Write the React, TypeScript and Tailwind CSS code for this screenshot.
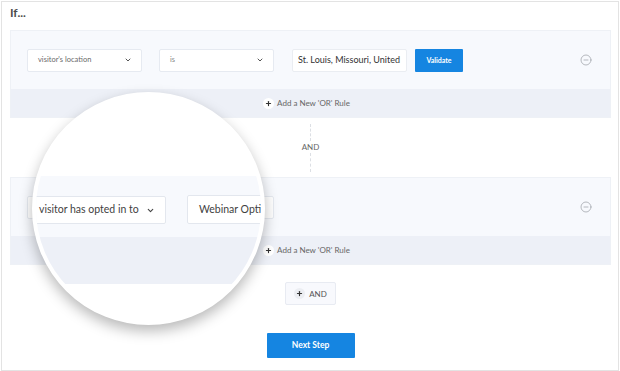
import { ChevronDown, MinusCircle, Plus } from "lucide-react";

function Select({ label, dim = false, hidden = false }: { label: string; dim?: boolean; hidden?: boolean }) {
  return (
    <div className="w-[115px] h-[23px] shrink-0 bg-white border border-[#e6eaf1] rounded-[2px] flex items-center justify-between pl-[10px] pr-[9px]">
      <span className={`text-[7.5px] ${dim ? "text-[#8a8a8a]" : "text-[#6a6a6a]"} ${hidden ? "invisible" : ""}`}>{label}</span>
      <ChevronDown className="w-[8px] h-[8px] text-[#555]" strokeWidth={3} />
    </div>
  );
}

function OrStrip() {
  return (
    <div className="h-[28px] bg-[#edf0f7] flex items-center justify-center gap-[3px] pr-[8px]">
      <span className="w-[11px] h-[11px] rounded-full bg-white flex items-center justify-center">
        <Plus className="w-[7px] h-[7px] text-[#333]" strokeWidth={4} />
      </span>
      <span className="text-[8px] text-[#666]">Add a New 'OR' Rule</span>
    </div>
  );
}

function RemoveIcon() {
  return <MinusCircle className="w-[12px] h-[12px] text-[#a3a7ad] ml-auto" strokeWidth={1.6} />;
}

export default function App() {
  return (
    <div className="w-[620px] h-[371px] bg-white relative overflow-hidden font-['Lato',sans-serif]">
      <div className="h-[370px] w-[618px] border border-[#e3e3e3] ml-px mt-px flex flex-col px-[8px]">
        <div className="h-[28px] pt-[2px] text-[12px] font-bold text-[#4d4d4d]">If...</div>

        {/* first rule group */}
        <div className="w-[601px] border border-[#eef1f6]">
          <div className="h-[58px] bg-[#f7f9fd] flex items-center pl-[16px] pr-[18px]">
            <Select label="visitor's location" />
            <div className="w-[17px]" />
            <Select label="is" dim />
            <div className="w-[18px]" />
            <div className="w-[115px] h-[23px] bg-white border border-[#eaedf2] rounded-[2px] flex items-center pl-[5px] overflow-hidden">
              <span className="text-[9px] text-[#333] whitespace-nowrap">St. Louis, Missouri, United</span>
            </div>
            <button className="ml-[8px] w-[48px] h-[23px] bg-[#1585e1] rounded-[1px] text-white text-[7px] font-bold">
              Validate
            </button>
            <RemoveIcon />
          </div>
          <OrStrip />
        </div>

        {/* AND connector */}
        <div className="h-[59px] w-[601px] flex flex-col items-center justify-center">
          <div className="h-[17px] border-l border-dashed border-[#dcdfe4]" />
          <span className="text-[8px] text-[#666] leading-[10px] my-[1px]">AND</span>
          <div className="h-[19px] border-l border-dashed border-[#dcdfe4]" />
        </div>

        {/* second rule group (labels shown in the magnifier) */}
        <div className="w-[601px] border border-[#eef1f6]">
          <div className="h-[58px] bg-[#f7f9fd] flex items-center pl-[16px] pr-[18px]">
            <Select label="visitor has opted in to" hidden />
            <div className="w-[17px]" />
            <Select label="Webinar Optin" hidden />
            <RemoveIcon />
          </div>
          <OrStrip />
        </div>

        <div className="w-[601px] flex justify-center pt-[17px]">
          <button className="w-[51px] h-[23px] bg-[#f8f9fd] border border-[#e8ebf2] rounded-[2px] flex items-center justify-center gap-[4px]">
            <span className="w-[11px] h-[11px] rounded-full bg-[#eceef3] flex items-center justify-center">
              <Plus className="w-[7px] h-[7px] text-[#333]" strokeWidth={4} />
            </span>
            <span className="text-[8px] text-[#555]">AND</span>
          </button>
        </div>

        <div className="w-[601px] flex justify-center pt-[28px]">
          <button className="w-[88px] h-[25px] bg-[#1585e1] rounded-[1px] text-white text-[8.5px] font-bold">
            Next Step
          </button>
        </div>
      </div>

      {/* magnifier overlay */}
      <div className="absolute left-[32px] top-[92px] w-[233px] h-[233px] rounded-full border-[4px] border-white shadow-[0_6px_14px_rgba(0,0,0,0.28)] overflow-hidden bg-white">
        <div className="absolute left-0 right-0 top-[80px] h-[61px] bg-[#f7f9fd]" />
        <div className="absolute left-0 right-0 top-[141px] h-[47px] bg-[#edf0f7]" />
        <div className="absolute left-[-10px] top-[100px] w-[140px] h-[28px] bg-white border border-[#e3e7ee] rounded-[2px] flex items-center justify-between pl-[12px] pr-[10px]">
          <span className="text-[10.5px] text-[#3f3f3f] whitespace-nowrap">visitor has opted in to</span>
          <ChevronDown className="w-[9px] h-[9px] text-[#444]" strokeWidth={3} />
        </div>
        <div className="absolute left-[151px] top-[99px] w-[120px] h-[29px] bg-white border border-[#e3e7ee] rounded-[2px] flex items-center pl-[11px]">
          <span className="text-[10.5px] text-[#3f3f3f] whitespace-nowrap">Webinar Optin</span>
        </div>
      </div>
    </div>
  );
}
